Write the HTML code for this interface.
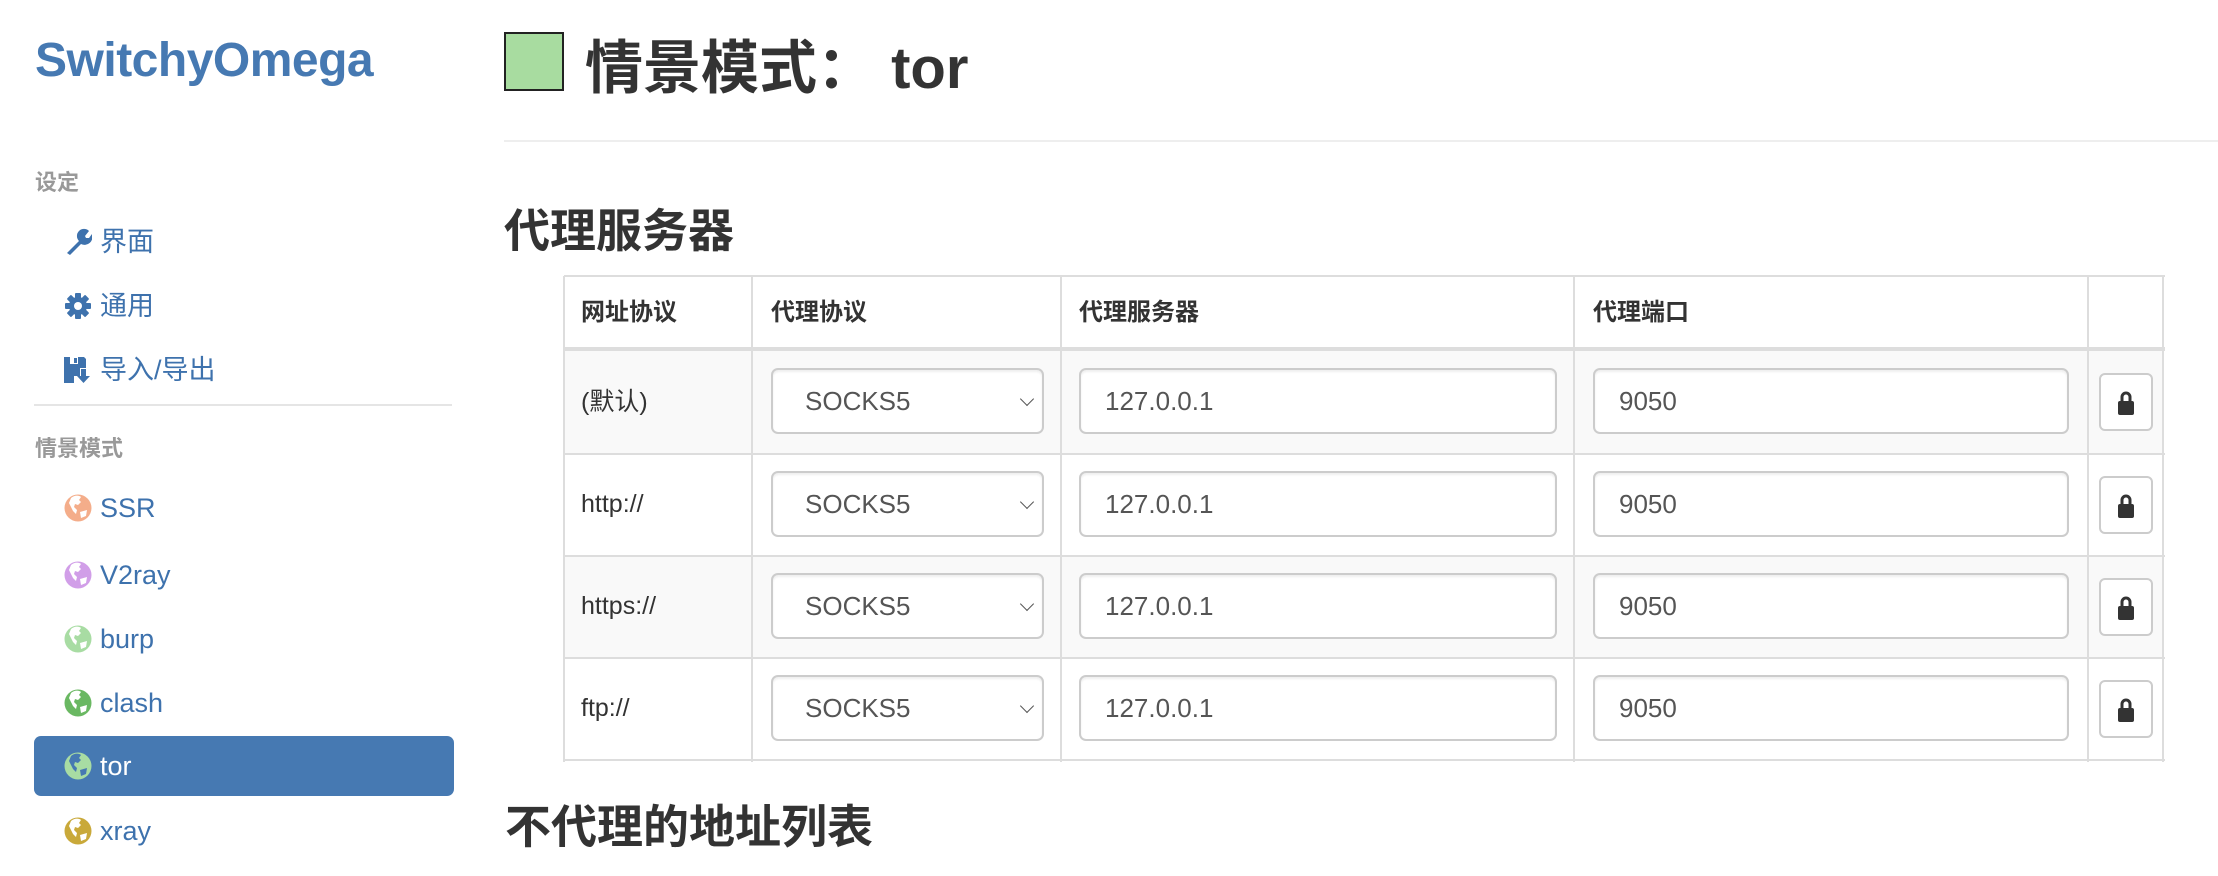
<!DOCTYPE html>
<html><head><meta charset="utf-8">
<style>
*{margin:0;padding:0;box-sizing:border-box}
body{width:2218px;height:876px;background:#fff;position:relative;overflow:hidden;font-family:"Liberation Sans","Noto Sans CJK SC",sans-serif;color:#333}
.a{position:absolute;white-space:nowrap}
.logo{left:35px;top:33px;font-size:48px;font-weight:bold;color:#4679b2;letter-spacing:-0.5px;line-height:56px}
.sh{left:35px;font-size:22px;font-weight:bold;color:#999;line-height:30px}
.item{left:64px;height:40px;line-height:40px;font-size:27px;color:#3e72ad}
.item svg{position:absolute;left:0;top:6px}
.item span{position:absolute;left:36px;top:0}
.active{left:34px;top:736px;width:420px;height:60px;background:#4679b2;border-radius:7px}
.vl{position:absolute;top:276px;width:2px;height:486px;background:#ddd}
.hl{position:absolute;left:564px;width:1601px;height:2px;background:#ddd}
.th{font-size:24px;font-weight:bold;line-height:30px;top:298px}
.td{left:581px;font-size:25px;line-height:30px}
.inp{position:absolute;height:66px;border:2px solid #ccc;border-radius:7px;background:#fff;font-size:26px;color:#555;line-height:62px;box-shadow:inset 0 2px 2px rgba(0,0,0,.07)}
.sel{left:771px;width:273px;padding-left:32px}
.sel i{position:absolute;right:10px;top:24px;width:10px;height:10px;border-right:1.5px solid #555;border-bottom:1.5px solid #555;transform:rotate(45deg)}
.srv{left:1079px;width:478px;padding-left:24px}
.prt{left:1593px;width:476px;padding-left:24px}
.lock{position:absolute;left:2099px;width:54px;height:58px;border:2px solid #ccc;border-radius:6px;background:#fff}
.lock svg{position:absolute;left:16px;top:15px}
</style></head><body>

<div class="a logo">SwitchyOmega</div>
<div class="a sh" style="top:168px">设定</div>

<div class="a item" style="top:222px"><svg width="28" height="28" viewBox="0 0 28 28"><path d="M3 25 L15 13 A7 7 0 0 1 25 3 L21 8 L22 10 L25 10 L28 6 A8 8 0 0 1 17 16 L6 27 Z" fill="#3e72ad"/></svg><span>界面</span></div>
<div class="a item" style="top:286px"><svg width="28" height="28" viewBox="0 0 28 28"><g fill="#3e72ad"><circle cx="14" cy="14" r="9"/><rect x="11" y="1" width="6" height="26" rx="1"/><rect x="1" y="11" width="26" height="6" rx="1"/><rect x="11" y="1" width="6" height="26" rx="1" transform="rotate(45 14 14)"/><rect x="11" y="1" width="6" height="26" rx="1" transform="rotate(-45 14 14)"/></g><circle cx="14" cy="14" r="4" fill="#fff"/></svg><span>通用</span></div>
<div class="a item" style="top:350px"><svg width="28" height="28" viewBox="0 0 28 28"><path d="M0 1 H20 L22 3 V12 H16 V20 H10 V27 H0 Z" fill="#3e72ad"/><rect x="6" y="1" width="8" height="7" fill="#fff"/><rect x="10" y="2" width="3" height="5" fill="#3e72ad"/><path d="M17 13 H22 V20 H26 L19.5 27 L13 20 H17 Z" fill="#3e72ad"/></svg><span>导入/导出</span></div>

<div class="a" style="left:34px;top:404px;width:418px;height:2px;background:#e5e5e5"></div>
<div class="a sh" style="top:434px">情景模式</div>

<div class="a active"></div>

<svg width="0" height="0" style="position:absolute"><defs><g id="gl"><path d="M7 4 C10 1 15 1 17 3 L15 6 L17 8 L14 11 L11 10 L10 13 L13 16 L12 20 L9 17 L7 13 L5 9 Z M16 18 L23 16 L22 22 L17 24 Z" fill="#fff"/></g></defs></svg>

<div class="a item" style="top:488px"><svg width="28" height="28" viewBox="0 0 28 28"><circle cx="14" cy="14" r="13.5" fill="#f4ad8a"/><use href="#gl"/></svg><span>SSR</span></div>
<div class="a item" style="top:555px"><svg width="28" height="28" viewBox="0 0 28 28"><circle cx="14" cy="14" r="13.5" fill="#d19ee8"/><use href="#gl"/></svg><span>V2ray</span></div>
<div class="a item" style="top:619px"><svg width="28" height="28" viewBox="0 0 28 28"><circle cx="14" cy="14" r="13.5" fill="#a8dca3"/><use href="#gl"/></svg><span>burp</span></div>
<div class="a item" style="top:683px"><svg width="28" height="28" viewBox="0 0 28 28"><circle cx="14" cy="14" r="13.5" fill="#6ab862"/><use href="#gl"/></svg><span>clash</span></div>
<div class="a item" style="top:746px;color:#fff"><svg width="28" height="28" viewBox="0 0 28 28"><circle cx="14" cy="14" r="13.5" fill="#a8dca3"/><path d="M7 4 C10 1 15 1 17 3 L15 6 L17 8 L14 11 L11 10 L10 13 L13 16 L12 20 L9 17 L7 13 L5 9 Z M16 18 L23 16 L22 22 L17 24 Z" fill="#4679b2"/></svg><span>tor</span></div>
<div class="a item" style="top:811px"><svg width="28" height="28" viewBox="0 0 28 28"><circle cx="14" cy="14" r="13.5" fill="#c9a93a"/><use href="#gl"/></svg><span>xray</span></div>

<!-- main -->
<div class="a" style="left:504px;top:32px;width:60px;height:59px;background:#a8dca0;border:2px solid #222"></div>
<div class="a" style="left:585px;top:34px;font-size:58px;line-height:70px;color:#333;font-weight:bold">情景模式：&nbsp;tor</div>
<div class="a" style="left:504px;top:140px;width:1714px;height:2px;background:#eee"></div>
<div class="a" style="left:504px;top:201px;font-size:46px;line-height:60px;font-weight:bold">代理服务器</div>

<!-- table -->
<div class="a" style="left:564px;top:349px;width:1600px;height:105px;background:#f9f9f9"></div>
<div class="a" style="left:564px;top:556px;width:1600px;height:102px;background:#f9f9f9"></div>
<div class="hl" style="top:275px"></div>
<div class="hl" style="top:347px;height:4px"></div>
<div class="hl" style="top:453px"></div>
<div class="hl" style="top:555px"></div>
<div class="hl" style="top:657px"></div>
<div class="hl" style="top:759px"></div>
<div class="vl" style="left:563px"></div>
<div class="vl" style="left:751px"></div>
<div class="vl" style="left:1060px"></div>
<div class="vl" style="left:1573px"></div>
<div class="vl" style="left:2087px"></div>
<div class="vl" style="left:2162px"></div>

<div class="a th" style="left:581px">网址协议</div>
<div class="a th" style="left:771px">代理协议</div>
<div class="a th" style="left:1079px">代理服务器</div>
<div class="a th" style="left:1593px">代理端口</div>

<div class="a td" style="top:387px">(默认)</div>
<div class="inp sel" style="top:368px">SOCKS5<i></i></div>
<div class="inp srv" style="top:368px">127.0.0.1</div>
<div class="inp prt" style="top:368px">9050</div>
<div class="lock" style="top:373px"><svg width="18" height="26" viewBox="0 0 18 26"><path d="M5 12 V7 A4 4 0 0 1 13 7 V12" fill="none" stroke="#333" stroke-width="3"/><rect x="1" y="11" width="16" height="14" rx="2" fill="#333"/></svg></div>

<div class="a td" style="top:489px">http://</div>
<div class="inp sel" style="top:471px">SOCKS5<i></i></div>
<div class="inp srv" style="top:471px">127.0.0.1</div>
<div class="inp prt" style="top:471px">9050</div>
<div class="lock" style="top:476px"><svg width="18" height="26" viewBox="0 0 18 26"><path d="M5 12 V7 A4 4 0 0 1 13 7 V12" fill="none" stroke="#333" stroke-width="3"/><rect x="1" y="11" width="16" height="14" rx="2" fill="#333"/></svg></div>

<div class="a td" style="top:591px">https://</div>
<div class="inp sel" style="top:573px">SOCKS5<i></i></div>
<div class="inp srv" style="top:573px">127.0.0.1</div>
<div class="inp prt" style="top:573px">9050</div>
<div class="lock" style="top:578px"><svg width="18" height="26" viewBox="0 0 18 26"><path d="M5 12 V7 A4 4 0 0 1 13 7 V12" fill="none" stroke="#333" stroke-width="3"/><rect x="1" y="11" width="16" height="14" rx="2" fill="#333"/></svg></div>

<div class="a td" style="top:693px">ftp://</div>
<div class="inp sel" style="top:675px">SOCKS5<i></i></div>
<div class="inp srv" style="top:675px">127.0.0.1</div>
<div class="inp prt" style="top:675px">9050</div>
<div class="lock" style="top:680px"><svg width="18" height="26" viewBox="0 0 18 26"><path d="M5 12 V7 A4 4 0 0 1 13 7 V12" fill="none" stroke="#333" stroke-width="3"/><rect x="1" y="11" width="16" height="14" rx="2" fill="#333"/></svg></div>

<div class="a" style="left:505px;top:797px;font-size:46px;line-height:60px;font-weight:bold">不代理的地址列表</div>
</body></html>
